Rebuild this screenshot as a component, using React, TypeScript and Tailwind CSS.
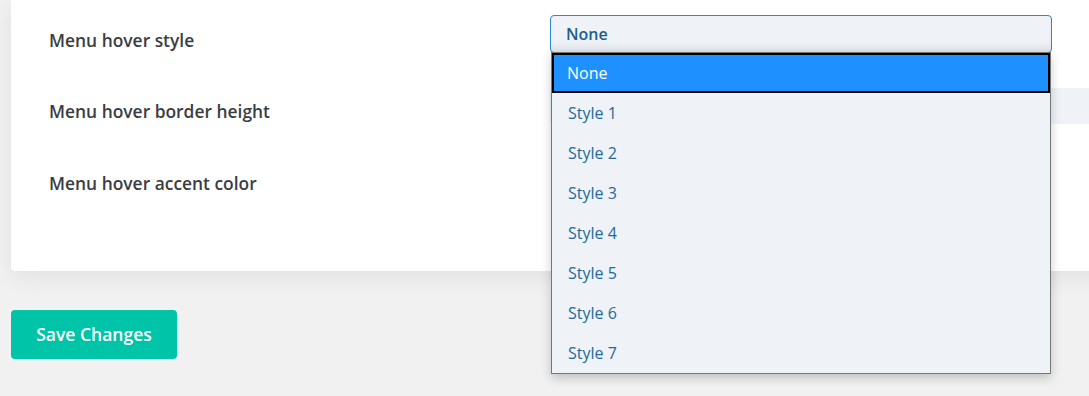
import React from "react";

const options = ["None", "Style 1", "Style 2", "Style 3", "Style 4", "Style 5", "Style 6", "Style 7"];

export default function App() {
  return (
    <div
      className="relative w-[1089px] h-[396px] overflow-hidden bg-[#f1f1f1]"
      style={{ fontFamily: '"Open Sans", "Noto Sans", sans-serif' }}
    >
      {/* Card */}
      <div className="ml-[11px] w-[1200px] h-[271px] bg-white rounded-b-[4px] shadow-[0_6px_24px_rgba(0,0,0,0.07)] pl-[38px] pt-[15px]">
        {/* Row 1 */}
        <div className="flex h-[73px]">
          <div className="w-[501px] mt-[13px] text-[17.4px] leading-[24px] font-semibold text-[#3a3d42]">
            Menu hover style
          </div>
          <div className="w-[502px] h-[38px] rounded-[4px] border border-[#2b8ac4] bg-[#eff3f8] shadow-[inset_0_-8px_10px_-4px_rgba(0,0,0,0.08)] flex items-center pl-[15px] text-[16px] font-semibold text-[#1b5f8e]">
            None
          </div>
        </div>
        {/* Row 2 */}
        <div className="flex h-[72px]">
          <div className="w-[501px] mt-[11px] text-[17.4px] leading-[24px] font-semibold text-[#3a3d42]">
            Menu hover border height
          </div>
          <div className="w-[600px] h-[36px] rounded-[4px] bg-[#eff3f8]" />
        </div>
        {/* Row 3 */}
        <div className="flex">
          <div className="w-[501px] mt-[11px] text-[17.4px] leading-[24px] font-semibold text-[#3a3d42]">
            Menu hover accent color
          </div>
        </div>
      </div>

      {/* Save button */}
      <button className="ml-[11px] mt-[39px] w-[166px] h-[49px] rounded-[4px] bg-[#00c4a7] text-white text-[17.5px] font-semibold">
        Save Changes
      </button>

      {/* Dropdown list */}
      <div className="absolute left-[551px] top-[52px] w-[500px] h-[322px] border border-[#767676] bg-[#eff3f8] shadow-[0_4px_10px_rgba(0,0,0,0.2)]">
        {options.map((o, i) => (
          <div
            key={o}
            className={
              i === 0
                ? "h-[40px] flex items-center pl-[13px] bg-[#1e90ff] border-2 border-black text-white text-[16px]"
                : "h-[40px] flex items-center pl-[16px] text-[#1d6a9b] text-[16px]"
            }
          >
            {o}
          </div>
        ))}
      </div>
    </div>
  );
}
